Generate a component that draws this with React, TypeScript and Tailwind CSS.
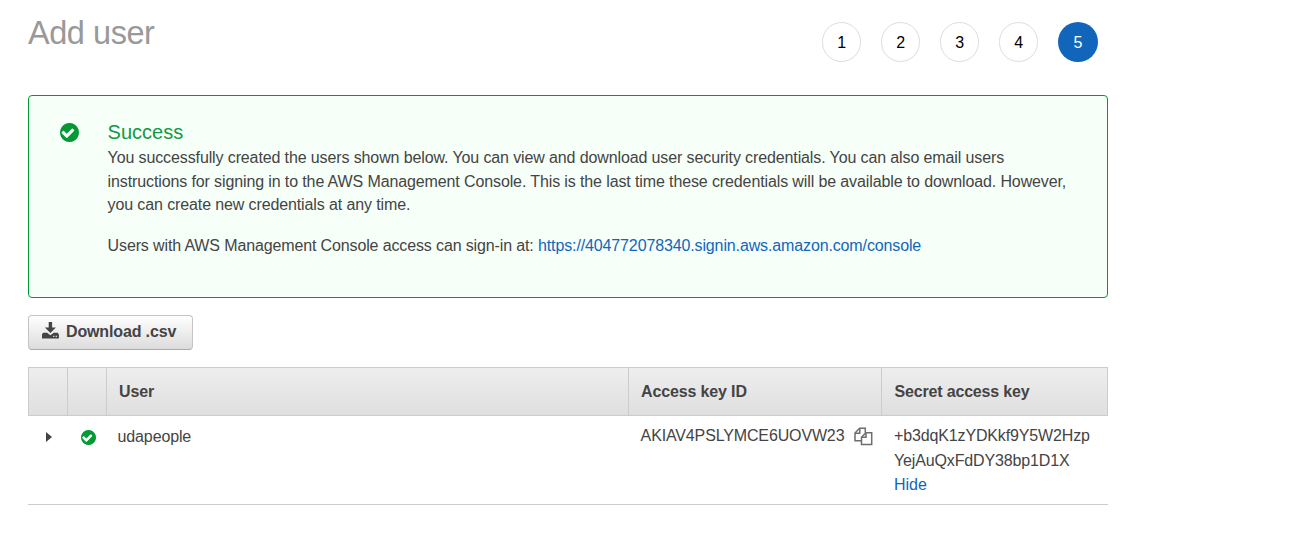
import React from "react";

function CheckCircle({ className }: { className: string }) {
  return (
    <svg viewBox="128 128 1536 1536" className={className} fill="#009933" aria-hidden="true">
      <path d="M1284 734q0-28-18-46l-91-90q-19-19-45-19t-45 19l-408 407-226-226q-19-19-45-19t-45 19l-91 90q-18 18-18 46 0 27 18 45l362 362q19 19 45 19 27 0 46-19l543-543q18-18 18-45zm380 162q0 209-103 385.5t-279.5 279.5-385.5 103-385.5-103-279.5-279.5-103-385.5 103-385.5 279.5-279.5 385.5-103 385.5 103 279.5 279.5 103 385.5z" />
    </svg>
  );
}

function DownloadIcon() {
  return (
    <svg viewBox="0 0 17 17" className="h-[17px] w-[17px]" fill="#444" aria-hidden="true">
      <path d="M6.7 0h3.4v5.4h3.8L8.4 11 2.9 5.4h3.8z" />
      <path
        fillRule="evenodd"
        d="M1 10.8h4.1l3.3 2.4 3.3-2.4h4.1l1.1 1.7v4H0v-4zM11.2 13.8v1.2h1.2v-1.2zM13.7 13.8v1.2h1.2v-1.2z"
      />
    </svg>
  );
}

function CopyIcon() {
  return (
    <svg viewBox="0 0 19 19" className="h-[19px] w-[19px]" fill="none" stroke="#6e6e6e" strokeWidth="1.5" aria-hidden="true">
      <path d="M7.5 13.7H1V6.1l4.6-4.8h5.7v4.5" />
      <path d="M5.8 1.4v4.8H1" />
      <path d="M11.9 5.7h5.8v11.8H7.5v-7.3z" />
      <path d="M12 5.7v4.6H7.5" />
    </svg>
  );
}

const steps = [1, 2, 3, 4, 5];

export default function App() {
  return (
    <div className="h-[548px] w-[1290px] overflow-hidden bg-white pl-7 font-['Liberation_Sans',Arial,sans-serif] text-base tracking-[-0.14px] text-[#444]">
      <div className="w-[1080px]">
        <header className="flex h-[95px] justify-between pr-[10px]">
          <h1 className="pt-[13px] text-[32.5px] leading-10 tracking-[-0.45px] text-[#999]">Add user</h1>
          <ol className="flex gap-[19.8px] pt-[22px]">
            {steps.map((step) => (
              <li
                key={step}
                className={
                  step === 5
                    ? "flex h-10 w-10 items-center justify-center rounded-full bg-[#1166bb] pt-px text-white"
                    : "flex h-10 w-[39.2px] items-center justify-center rounded-full border border-[#ddd] pt-px text-black"
                }
              >
                {step}
              </li>
            ))}
          </ol>
        </header>

        <section className="flex h-[203px] rounded-[4px] border border-[#009933] bg-[#f7fff9] pl-[31px] pt-[26px]">
          <CheckCircle className="mt-[0.5px] h-[19px] w-[19px] shrink-0" />
          <div className="ml-[28.6px] w-[970px]">
            <h2 className="text-xl leading-5 tracking-normal text-[#119944]">Success</h2>
            <p className="mt-[4px] leading-[23.5px] tracking-[-0.117px]">
              You successfully created the users shown below. You can view and download user security credentials. You can also email users
              <br />
              instructions for signing in to the AWS Management Console. This is the last time these credentials will be available to download. However,
              <br />
              you can create new credentials at any time.
            </p>
            <p className="mt-[17px] leading-6 tracking-[-0.13px]">
              Users with AWS Management Console access can sign-in at:{" "}
              <a href="#" className="text-[#1166bb]">https://404772078340.signin.aws.amazon.com/console</a>
            </p>
          </div>
        </section>

        <button className="mt-[17px] flex h-[35px] w-[165px] items-center rounded-[4px] border border-[#c4c4c4] border-b-[#aaa] bg-linear-to-b from-white to-[#dcdcdc] pl-[13px] font-bold">
          <span className="-mt-1"><DownloadIcon /></span>
          <span className="-mt-px ml-[7px] whitespace-nowrap">Download .csv</span>
        </button>

        <div className="mt-[17px]">
          <div className="grid h-[49px] grid-cols-[39px_39px_522px_253px_227px] border border-[#ccc] bg-linear-to-b from-[#eee] to-[#dfdfdf] font-bold leading-[47px]">
            <div className="border-r border-[#ccc]" />
            <div className="border-r border-[#ccc]" />
            <div className="border-r border-[#ccc] pl-[12px]">User</div>
            <div className="border-r border-[#ccc] pl-[12px]">Access key ID</div>
            <div className="pl-[12.6px] tracking-[-0.18px]">Secret access key</div>
          </div>
          <div className="grid h-[89px] grid-cols-[40px_39px_522px_253px_226px] border-b border-[#ccc] pt-2">
            <div className="pl-[18px] pt-2">
              <svg viewBox="0 0 6 10" className="h-[10px] w-[6px]" fill="#444" aria-hidden="true">
                <path d="M0 0l6 5-6 5z" />
              </svg>
            </div>
            <div className="pl-[12.5px] pt-[5.5px]"><CheckCircle className="h-[15px] w-[15px]" /></div>
            <div className="pl-[10.6px] leading-[26px]">udapeople</div>
            <div className="flex pl-[11.6px] leading-6">
              <span>AKIAV4PSLYMCE6UOVW23</span>
              <span className="ml-[10px] mt-[3px]"><CopyIcon /></span>
            </div>
            <div className="pl-[12px] leading-[24.5px]">
              <div>+b3dqK1zYDKkf9Y5W2Hzp</div>
              <div>YejAuQxFdDY38bp1D1X</div>
              <a href="#" className="block tracking-normal text-[#1166bb]">Hide</a>
            </div>
          </div>
        </div>
      </div>
    </div>
  );
}
